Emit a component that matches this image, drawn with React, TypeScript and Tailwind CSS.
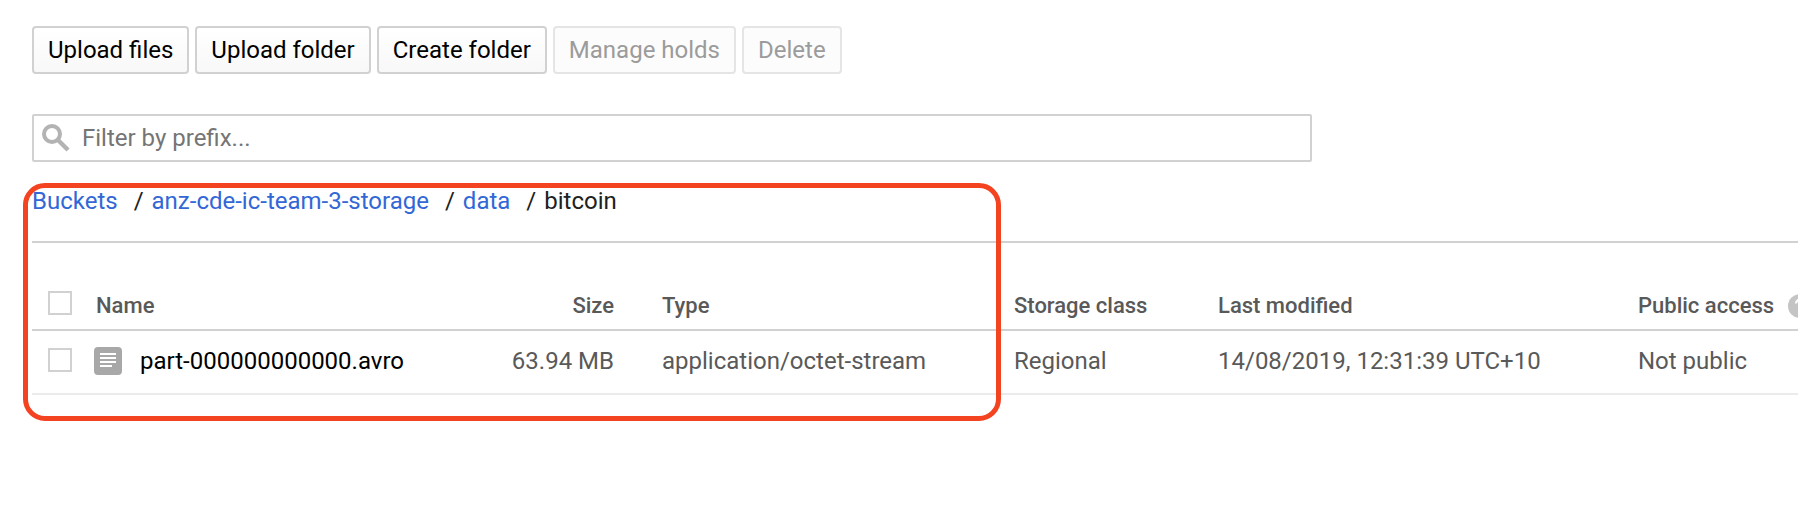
import React from "react";

type ActionProps = { label: string; disabled?: boolean };

function ActionButton({ label, disabled = false }: ActionProps) {
  return (
    <button
      type="button"
      disabled={disabled}
      className="h-12 shrink-0 rounded-[4px] border-2 border-[#d1d1d1] bg-linear-to-b from-white to-[#f8f8f8] px-3.5 text-black disabled:border-[#e5e5e5] disabled:from-[#fcfcfc] disabled:to-[#fcfcfc] disabled:text-[#9b9b9b]"
    >
      {label}
    </button>
  );
}

function Checkbox({ label }: { label: string }) {
  return (
    <input
      type="checkbox"
      aria-label={label}
      className="block size-6 appearance-none border-2 border-[#d1d1d1] bg-white checked:bg-[#3367d6]"
    />
  );
}

function SearchIcon() {
  return (
    <svg viewBox="0 0 28 28" className="size-7 shrink-0" fill="none" stroke="#b3b3b3" aria-hidden="true">
      <circle cx="10" cy="10" r="8" strokeWidth="4" />
      <path d="M15.5 15.5 26 26" strokeWidth="4.4" />
    </svg>
  );
}

function FileIcon() {
  return (
    <svg viewBox="0 0 28 28" className="size-7 shrink-0" aria-hidden="true">
      <rect width="28" height="28" rx="4" fill="#a8a8a8" />
      <path d="M6 7h16M6 11h16M6 15h16M6 19h12" stroke="#fff" strokeWidth="2" />
    </svg>
  );
}

function HelpIcon() {
  return (
    <svg viewBox="0 0 24 24" className="size-6 shrink-0" aria-hidden="true">
      <circle cx="12" cy="12" r="12" fill="#c4c4c4" />
      <path d="M8 9.5a4 4 0 1 1 6.4 3.2C13 13.7 12 14 12 15.5" fill="none" stroke="#fff" strokeWidth="2.2" />
      <circle cx="12" cy="19" r="1.4" fill="#fff" />
    </svg>
  );
}

const crumbs = ["Buckets", "anz-cde-ic-team-3-storage", "data"];

export default function App() {
  return (
    <main className="min-h-screen overflow-hidden bg-white pl-8 pt-[26px] font-['Roboto',sans-serif] text-2xl leading-7 text-[#212121]">
      <div className="flex gap-1.5">
        <ActionButton label="Upload files" />
        <ActionButton label="Upload folder" />
        <ActionButton label="Create folder" />
        <ActionButton label="Manage holds" disabled />
        <ActionButton label="Delete" disabled />
      </div>

      <label className="mt-10 flex h-12 max-w-[1280px] items-center gap-3 rounded-[2px] border-2 border-[#d1d1d1] pl-2">
        <SearchIcon />
        <input
          type="text"
          aria-label="Filter by prefix"
          placeholder="Filter by prefix..."
          className="min-w-0 flex-1 bg-transparent outline-none placeholder:text-[#757575]"
        />
      </label>

      <section className="relative mt-[25px]">
        <nav aria-label="Breadcrumb" className="h-[54px]">
          <ol className="flex">
            {crumbs.map((crumb) => (
              <li key={crumb} className="flex shrink-0">
                <a href="#" className="text-[#3367d6]">{crumb}</a>
                <span className="pl-4 pr-2">/</span>
              </li>
            ))}
            <li>bitcoin</li>
          </ol>
        </nav>

        <table className="w-full table-fixed whitespace-nowrap border-t-2 border-[#d1d1d1] text-left text-[#595959]">
          <colgroup>
            <col className="w-[62px]" />
            <col className="w-[340px]" />
            <col className="w-[180px]" />
            <col className="w-[400px]" />
            <col className="w-[204px]" />
            <col className="w-[420px]" />
            <col />
          </colgroup>
          <thead>
            <tr className="h-[88px] border-b-2 border-[#d1d1d1] align-bottom text-[22px] leading-7">
              <th className="pb-3.5 pl-4">
                <Checkbox label="Select all objects" />
              </th>
              <th className="pb-[9px] pl-0.5 font-medium">Name</th>
              <th className="pb-[9px] text-right font-medium">Size</th>
              <th className="pb-[9px] pl-12 font-medium">Type</th>
              <th className="pb-[9px] font-medium">Storage class</th>
              <th className="pb-[9px] font-medium">Last modified</th>
              <th className="pb-[9px] font-medium">
                <span className="flex items-center gap-3.5">
                  Public access
                  <HelpIcon />
                </span>
              </th>
            </tr>
          </thead>
          <tbody>
            <tr className="h-16 border-b-2 border-[#ebebeb]">
              <td className="pb-1 pl-4">
                <Checkbox label="Select part-000000000000.avro" />
              </td>
              <td className="pb-0.5">
                <span className="flex items-center gap-[18px] text-black">
                  <FileIcon />
                  part-000000000000.avro
                </span>
              </td>
              <td className="pb-0.5 text-right">63.94 MB</td>
              <td className="pb-0.5 pl-12">application/octet-stream</td>
              <td className="pb-0.5">Regional</td>
              <td className="pb-0.5">14/08/2019, 12:31:39 UTC+10</td>
              <td className="pb-0.5">Not public</td>
            </tr>
          </tbody>
        </table>

        <div className="pointer-events-none absolute -bottom-[26px] -left-[9px] -top-1 w-[978px] rounded-[22px] border-[5px] border-[#f44321]" />
      </section>
    </main>
  );
}
